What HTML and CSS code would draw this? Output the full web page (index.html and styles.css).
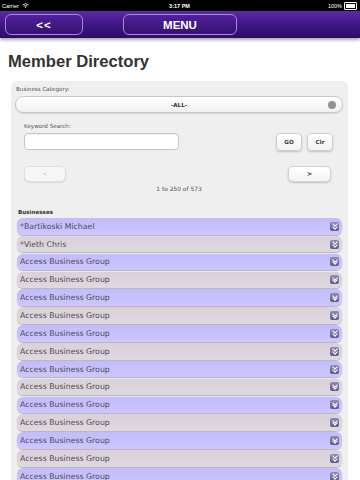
FILE: index.html
```html
<!DOCTYPE html>
<html lang="en">
<head>
  <meta charset="UTF-8">
  <meta name="viewport" content="width=device-width, initial-scale=1.0">
  <title>Member Directory</title>
  <link rel="stylesheet" href="styles.css">
</head>
<body>
  <div class="status-bar">
    <div class="carrier">Carrier
      <svg class="wifi" width="7" height="5" viewBox="0 0 14 10"><path d="M1 4a9 9 0 0 1 12 0M3.5 6.3a5.5 5.5 0 0 1 7 0" fill="none" stroke="#fff" stroke-width="1.6"/><path d="M7 10l-1.8-2a2.6 2.6 0 0 1 3.6 0z" fill="#fff"/></svg>
    </div>
    <div class="clock">3:17 PM</div>
    <div class="battery">100%
      <span class="battery-icon"><span class="battery-level"></span></span>
    </div>
  </div>

  <div class="navbar">
    <button class="nav-btn back">&lt;&lt;</button>
    <button class="nav-btn menu">MENU</button>
  </div>

  <h1 class="title">Member Directory</h1>

  <div class="panel">
    <div class="field-label">Business Category:</div>
    <div class="select">
      <span class="select-value">-ALL-</span>
      <span class="select-dot"></span>
    </div>

    <div class="search">
      <div class="field-label">Keyword Search:</div>
      <div class="search-row">
        <input class="keyword" type="text">
        <div class="search-buttons">
          <button class="small-btn">GO</button>
          <button class="small-btn">Clr</button>
        </div>
      </div>
      <div class="pager">
        <button class="page-btn disabled">&lt;</button>
        <button class="page-btn next">&gt;</button>
      </div>
    </div>
    <div class="count">1 to 250 of 573</div>

    <div class="section-label">Businesses</div>
    <div class="list">
      <div class="row odd"><span>*Bartikoski Michael</span><span class="expand"></span></div>
      <div class="row even"><span>*Vieth Chris</span><span class="expand"></span></div>
      <div class="row odd"><span>Access Business Group</span><span class="expand"></span></div>
      <div class="row even"><span>Access Business Group</span><span class="expand"></span></div>
      <div class="row odd"><span>Access Business Group</span><span class="expand"></span></div>
      <div class="row even"><span>Access Business Group</span><span class="expand"></span></div>
      <div class="row odd"><span>Access Business Group</span><span class="expand"></span></div>
      <div class="row even"><span>Access Business Group</span><span class="expand"></span></div>
      <div class="row odd"><span>Access Business Group</span><span class="expand"></span></div>
      <div class="row even"><span>Access Business Group</span><span class="expand"></span></div>
      <div class="row odd"><span>Access Business Group</span><span class="expand"></span></div>
      <div class="row even"><span>Access Business Group</span><span class="expand"></span></div>
      <div class="row odd"><span>Access Business Group</span><span class="expand"></span></div>
      <div class="row even"><span>Access Business Group</span><span class="expand"></span></div>
      <div class="row odd"><span>Access Business Group</span><span class="expand"></span></div>
    </div>
  </div>
</body>
</html>
```

FILE: styles.css
```css
body {
  margin: 0;
  background: #fff;
  font-family: "DejaVu Sans", Verdana, sans-serif;
  height: 480px;
  overflow: hidden;
}
button {
  font-family: inherit;
  cursor: pointer;
}

/* status bar */
.status-bar {
  height: 11px;
  background: #000;
  color: #fff;
  display: flex;
  align-items: center;
  justify-content: space-between;
  padding: 0 3px 0 2px;
  font-family: "Liberation Sans", Arial, sans-serif;
  font-size: 5.5px;
}
.carrier, .battery {
  flex: 1;
  display: flex;
  align-items: center;
  gap: 3px;
}
.battery {
  justify-content: flex-end;
  gap: 2px;
}
.clock {
  font-weight: bold;
}
.battery-icon {
  width: 9px;
  height: 4px;
  border: 1px solid #fff;
  border-radius: 1px;
  padding: 1px;
  box-sizing: content-box;
  display: flex;
}
.battery-level {
  flex: 1;
  background: #fff;
}

/* nav */
.navbar {
  height: 27px;
  background: linear-gradient(#5e28aa, #3f1787 50%, #2b0d66);
  box-shadow: 0 2px 3px rgba(0, 0, 0, 0.35);
  display: flex;
  align-items: center;
  gap: 40px;
  padding: 0 5px;
}
.nav-btn {
  height: 21px;
  border: 1px solid #a58bd6;
  border-radius: 6px;
  background: linear-gradient(#52219a, #361172);
  color: #fff;
  font-family: "Liberation Sans", Arial, sans-serif;
  font-weight: bold;
  font-size: 11.5px;
  padding: 0;
}
.back {
  width: 78px;
  letter-spacing: 1px;
}
.menu {
  width: 114px;
}

.title {
  margin: 14px 0 0 8px;
  font-family: "Liberation Sans", Arial, sans-serif;
  font-size: 16.6px;
  font-weight: bold;
  color: #333;
  line-height: 20px;
  height: 24px;
}

/* panel */
.panel {
  margin: 5px 12px 0 11px;
  background: #efefef;
  border-radius: 6px 6px 0 0;
  padding: 4px 5px 0 4px;
  height: 395px;
  overflow: hidden;
}
.field-label {
  font-size: 5.6px;
  color: #555;
  line-height: 8px;
  padding-left: 1px;
  margin-bottom: 3px;
}
.select {
  height: 17px;
  box-sizing: border-box;
  border: 1px solid #c9c9c9;
  border-radius: 8px;
  background: linear-gradient(#fff, #f1f1f1);
  box-shadow: 0 1px 1px rgba(0, 0, 0, 0.12);
  display: flex;
  align-items: center;
  justify-content: center;
  position: relative;
}
.select-value {
  font-size: 5.6px;
  font-weight: bold;
  color: #333;
}
.select-dot {
  position: absolute;
  right: 6px;
  top: 3.5px;
  width: 8px;
  height: 8px;
  border-radius: 50%;
  background: #939393;
}

.search {
  padding: 9px 10px 0 9px;
}
.search .field-label {
  padding-left: 0;
  margin-bottom: 3px;
}
.search-row {
  display: flex;
  justify-content: space-between;
  align-items: flex-start;
}
.keyword {
  width: 155px;
  height: 17px;
  box-sizing: border-box;
  border: 1px solid #c6c6c6;
  border-radius: 4px;
  background: #fff;
  box-shadow: inset 0 1px 1px rgba(0, 0, 0, 0.06);
  margin: 0;
  padding: 0 3px;
}
.search-buttons {
  display: flex;
  gap: 5px;
}
.small-btn {
  width: 26px;
  height: 18px;
  border: 1px solid #cfcfcf;
  border-radius: 4px;
  background: linear-gradient(#fff, #f2f2f2);
  box-shadow: 0 1px 2px rgba(0, 0, 0, 0.2);
  font-size: 5.6px;
  font-weight: bold;
  color: #333;
  padding: 0;
}
.pager {
  display: flex;
  justify-content: space-between;
  margin-top: 15px;
  padding-right: 2px;
}
.page-btn {
  width: 43px;
  height: 16px;
  border: 1px solid #d2d2d2;
  border-radius: 5px;
  background: linear-gradient(#fff, #f3f3f3);
  box-shadow: 0 1px 2px rgba(0, 0, 0, 0.2);
  font-size: 6.5px;
  font-weight: bold;
  color: #333;
  padding: 0;
}
.page-btn.disabled {
  width: 42px;
  color: #ccc;
  font-weight: normal;
  box-shadow: 0 1px 1px rgba(0, 0, 0, 0.08);
  background: #f6f6f6;
  border-color: #dedede;
}
.count {
  text-align: center;
  font-size: 5.9px;
  color: #555;
  line-height: 8px;
  margin-top: 3px;
}
.section-label {
  font-size: 5.6px;
  font-weight: bold;
  color: #333;
  line-height: 8px;
  margin: 15px 0 0 3px;
}

/* list */
.list {
  display: flex;
  flex-direction: column;
  gap: 1.36px;
  padding: 0 1px 0 2px;
  margin-top: 2px;
}
.row {
  height: 16.5px;
  flex-shrink: 0;
  box-sizing: border-box;
  border-radius: 6px;
  display: flex;
  align-items: center;
  justify-content: space-between;
  padding: 0 3px 0 3px;
  font-size: 7.8px;
  color: #4d4d4d;
  box-shadow: 0 1px 1px rgba(0, 0, 0, 0.25);
}
.row.odd {
  background: linear-gradient(#c3bbfd, #cdc6ff);
}
.row.even {
  background: linear-gradient(#d9d0da, #e0d8e0);
}
.expand {
  width: 9px;
  height: 9px;
  border-radius: 2px;
  background: linear-gradient(#8f8bb4, #5e5a86);
  position: relative;
}
.expand::before,
.expand::after {
  content: "";
  position: absolute;
  left: 2.5px;
  width: 3px;
  height: 3px;
  border-right: 1px solid #fff;
  border-bottom: 1px solid #fff;
  transform: rotate(45deg);
}
.expand::before {
  top: 0.5px;
}
.expand::after {
  top: 3px;
}
```
